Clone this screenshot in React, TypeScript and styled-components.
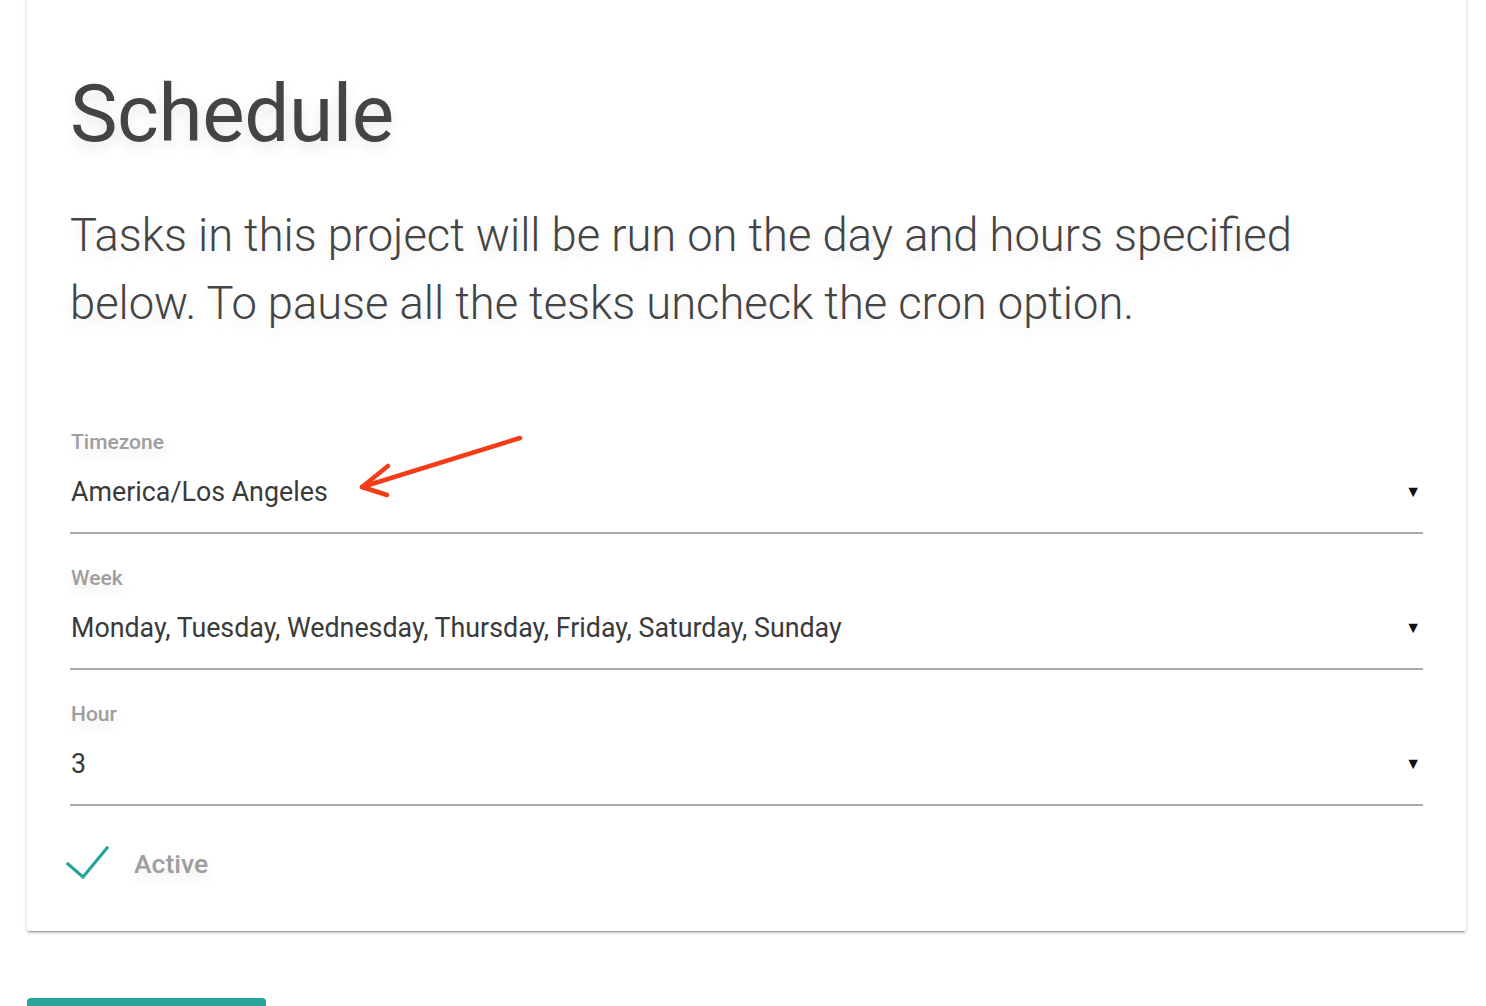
import React from "react";
import styled, { createGlobalStyle } from "styled-components";

const Global = createGlobalStyle`
  html, body { margin: 0; padding: 0; background: #ffffff; }
  body { font-family: Roboto, "Noto Sans", Arial, sans-serif; overflow: hidden; }
`;

const Page = styled.div`
  width: 1486px;
  height: 1006px;
  overflow: hidden;
  padding: 0 20px 0 27px;
  box-sizing: border-box;
  display: flex;
  flex-direction: column;
`;

const Card = styled.div`
  position: relative;
  flex-shrink: 0;
  width: 1439px;
  height: 941px;
  margin-top: -10px;
  box-sizing: border-box;
  background: #fff;
  border-radius: 2px;
  box-shadow: 0 2px 2px 0 rgba(0,0,0,0.14), 0 1px 5px 0 rgba(0,0,0,0.12), 0 3px 1px -2px rgba(0,0,0,0.2);
  padding: 74px 43px 0 43px;
  display: flex;
  flex-direction: column;
`;

const glow = `text-shadow: 0 6px 14px rgba(0,0,0,0.10);`;

const Title = styled.h1`
  margin: 0;
  font-family: Roboto, sans-serif;
  font-weight: 400;
  font-size: 80px;
  line-height: 100px;
  color: #444;
  letter-spacing: -0.4px;
  ${glow}
`;

const Lead = styled.p`
  margin: 38px 0 0 0;
  font-family: Roboto, sans-serif;
  font-weight: 300;
  font-size: 45.3px;
  line-height: 68px;
  color: #444;
  width: 1260px;
  ${glow}
`;

const Fields = styled.div`
  margin-top: 92px;
  display: flex;
  flex-direction: column;
  width: 1353px;
`;

const Field = styled.div`
  display: flex;
  flex-direction: column;
  border-bottom: 2px solid #a8a8a8;
  margin-bottom: 32px;
  padding-bottom: 26px;
`;

const Label = styled.div`
  font-family: Roboto, sans-serif;
  font-weight: 500;
  font-size: 21px;
  line-height: 24px;
  color: #9e9e9e;
  padding-left: 1px;
  ${glow}
`;

const ValueRow = styled.div`
  margin-top: 24px;
  display: flex;
  align-items: center;
  justify-content: space-between;
  padding-right: 2px;
`;

const Value = styled.div`
  font-family: Roboto, sans-serif;
  font-weight: 400;
  font-size: 26.8px;
  line-height: 28px;
  color: #3a3a3a;
  padding-left: 1px;
`;

const Caret = styled.span`
  font-size: 16px;
  color: #111;
  line-height: 28px;
`;

const CheckRow = styled.div`
  display: flex;
  align-items: center;
  gap: 24px;
  margin-top: 8px;
  margin-left: -4px;
`;

const CheckLabel = styled.span`
  font-family: Roboto, sans-serif;
  font-weight: 500;
  font-size: 26.5px;
  color: #9e9e9e;
  ${glow}
`;

const ArrowOverlay = styled.svg`
  position: absolute;
  left: 327px;
  top: 450px;
  overflow: visible;
`;

const Button = styled.div`
  flex-shrink: 0;
  margin-top: 67px;
  width: 239px;
  height: 40px;
  background: #26a69a;
  border-radius: 4px;
`;

const fields = [
  { label: "Timezone", value: "America/Los Angeles" },
  { label: "Week", value: "Monday, Tuesday, Wednesday, Thursday, Friday, Saturday, Sunday" },
  { label: "Hour", value: "3" },
];

export default function App() {
  return (
    <Page>
      <Global />
      <Card>
        <Title>Schedule</Title>
        <Lead>
          Tasks in this project will be run on the day and hours specified below. To pause all the tesks uncheck the cron option.
        </Lead>
        <Fields>
          {fields.map((f) => (
            <Field key={f.label}>
              <Label>{f.label}</Label>
              <ValueRow>
                <Value>{f.value}</Value>
                <Caret>▼</Caret>
              </ValueRow>
            </Field>
          ))}
        </Fields>
        <CheckRow>
          <svg width="44" height="34" viewBox="0 0 44 34">
            <path d="M2 18 L17 31 L41 2" fill="none" stroke="#26a69a" strokeWidth="3.2" strokeLinecap="square" />
          </svg>
          <CheckLabel>Active</CheckLabel>
        </CheckRow>
        <ArrowOverlay width="170" height="60" viewBox="0 0 170 60">
          <g stroke="#f43c16" strokeWidth="4.5" fill="none" strokeLinecap="round" strokeLinejoin="round">
            <path d="M166 -2 L8 47" />
            <path d="M34 26 L8 47 L33 55" />
          </g>
        </ArrowOverlay>
      </Card>
      <Button />
    </Page>
  );
}
